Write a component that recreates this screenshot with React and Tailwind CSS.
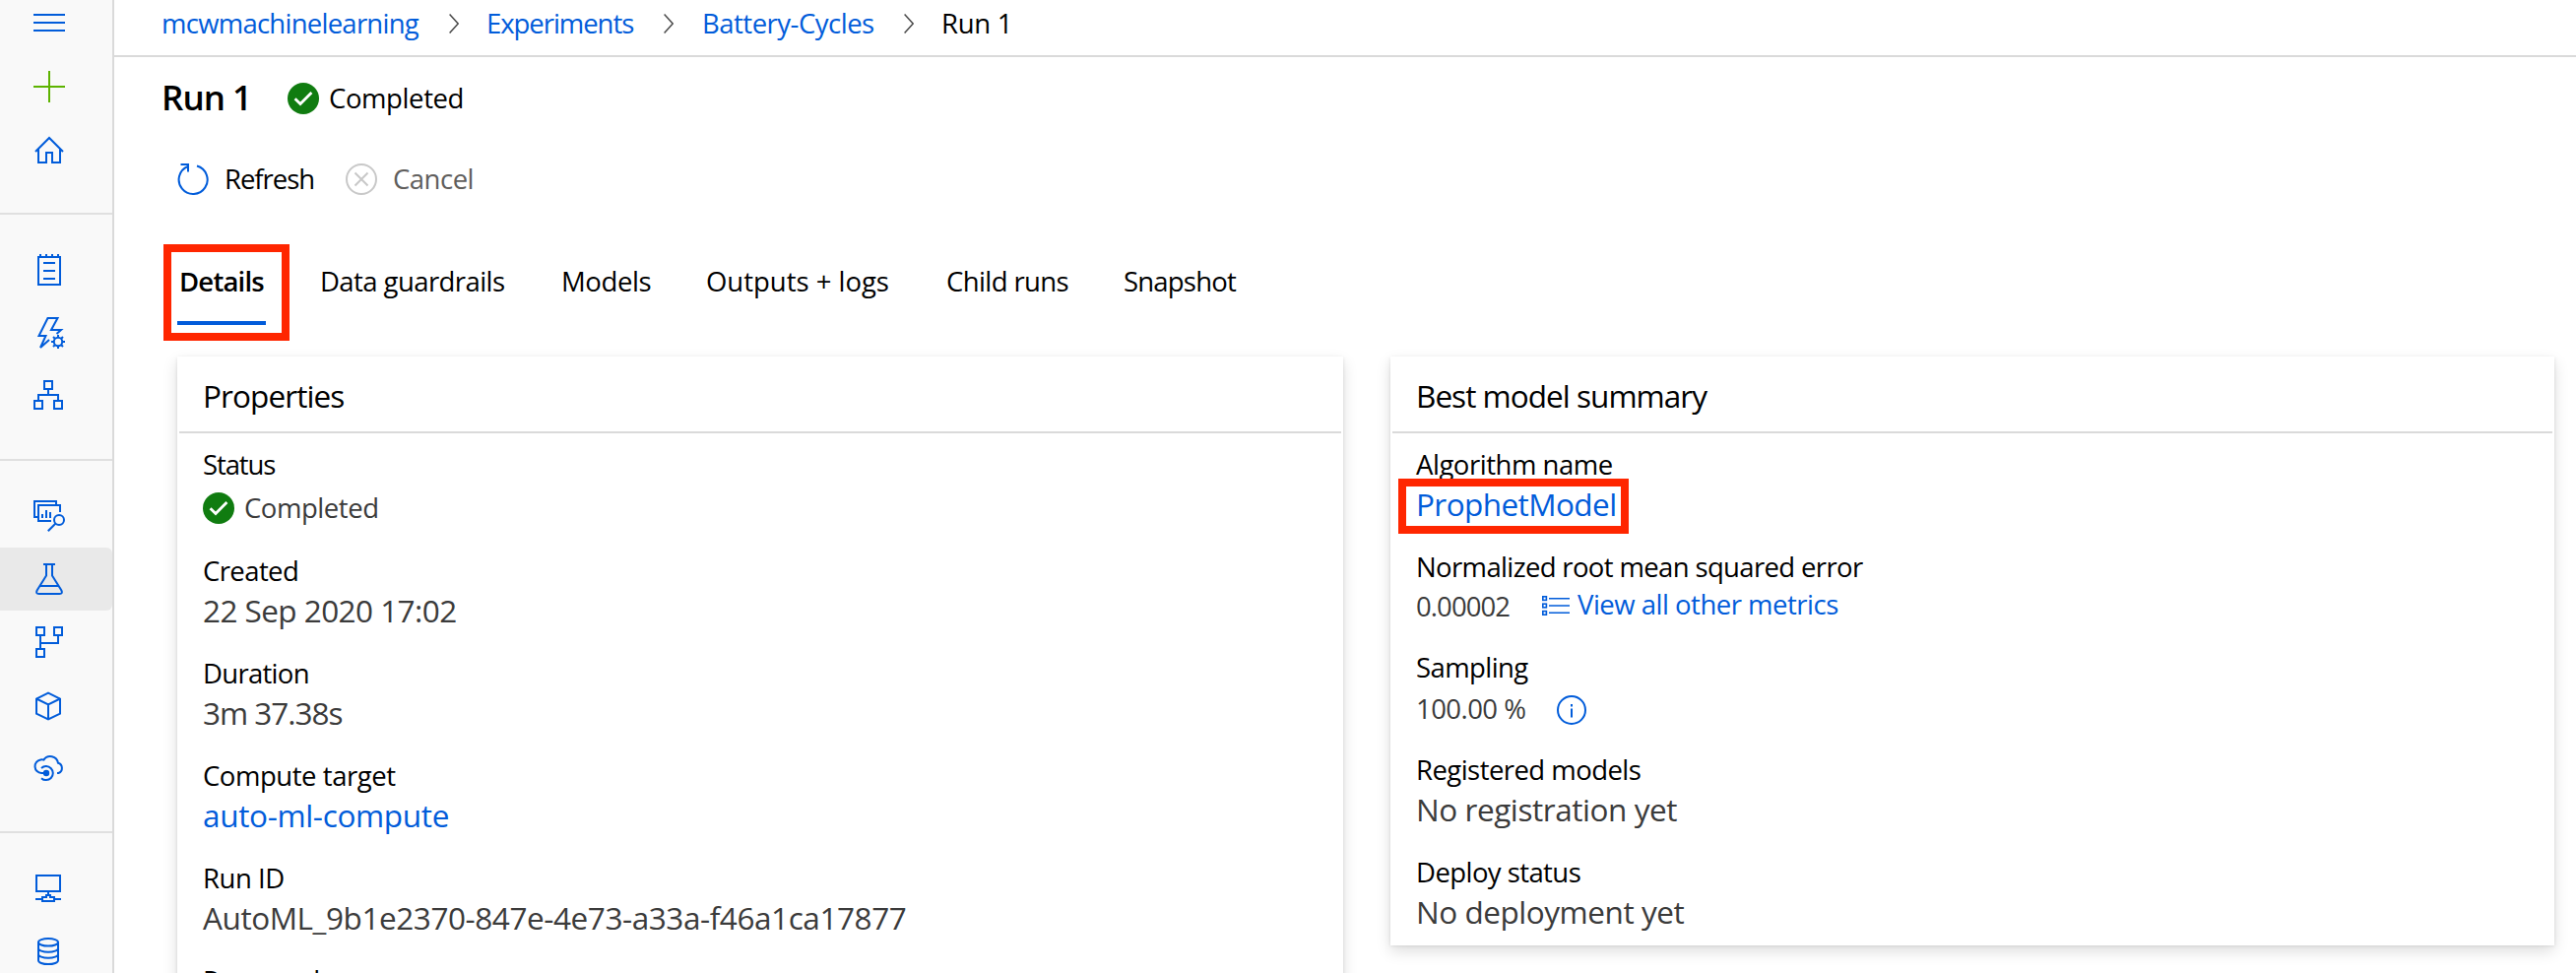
import React from "react";

/* ---------- icons ---------- */

function Glyph({ children, className = "text-[#015cda]" }) {
  return (
    <svg
      viewBox="0 0 32 32"
      className={`size-8 shrink-0 ${className}`}
      fill="none"
      stroke="currentColor"
      strokeWidth="2"
    >
      {children}
    </svg>
  );
}

const MenuIcon = () => (
  <Glyph>
    <path d="M0 7H32M0 15H32M0 23H32" />
  </Glyph>
);

const PlusIcon = () => (
  <Glyph className="text-[#5db300]">
    <path d="M0 16H32M16 0V32" />
  </Glyph>
);

const HomeIcon = () => (
  <Glyph>
    <path d="M5 15V29H13V19H19V29H27V15" />
    <path d="M2 18L16 4L30 18" />
  </Glyph>
);

const NotebookIcon = () => (
  <Glyph>
    <rect x="5" y="3" width="22" height="28" />
    <path d="M7 0V3M13 0V3M19 0V3M25 0V3M10 9H22M10 17H22M10 25H22" />
  </Glyph>
);

const AutoMlIcon = () => (
  <Glyph>
    <path d="M23.5 17L28 13H18L24.5 1H14.5L5.5 19H12.5L7 31L16 23" />
    <circle cx="25" cy="25" r="4.2" />
    <path d="M25 18V20.5M25 29.5V32M18 25H20.5M29.5 25H32M20 20L21.8 21.8M28.2 28.2L30 30M20 30L21.8 28.2M28.2 21.8L30 20" />
  </Glyph>
);

const DesignerIcon = () => (
  <Glyph>
    <rect x="11" y="1" width="8" height="8" />
    <rect x="1" y="21" width="8" height="8" />
    <rect x="21" y="21" width="8" height="8" />
    <path d="M15 9V15M5 21V15H25V21" />
  </Glyph>
);

const DatasetsIcon = () => (
  <Glyph>
    <path d="M5 17H1V1H23V5" />
    <path d="M27 12V5H5V21H18" />
    <path d="M9 14V18M13 10V18M17 12V18" />
    <circle cx="26" cy="20" r="5" />
    <path d="M22.5 23.5L14.8 31.2" />
  </Glyph>
);

const FlaskIcon = () => (
  <Glyph>
    <path d="M10 1H22M13 1V12.5L3.6 27.5Q2 31 5.5 31H26.5Q30 31 28.4 27.5L19 12.5V1" />
    <path d="M6.5 23H25.5" />
  </Glyph>
);

const PipelineIcon = () => (
  <Glyph>
    <rect x="3" y="1" width="8" height="8" />
    <rect x="21" y="1" width="8" height="8" />
    <rect x="3" y="23" width="8" height="8" />
    <path d="M7 9V23M25 9V17H7" />
  </Glyph>
);

const CubeIcon = () => (
  <Glyph>
    <path d="M15 3.6L27 9.5V24.7L15 30.5L3 24.7V9.5Z" />
    <path d="M3 9.5L15 15.5L27 9.5M15 15.5V30.5" />
  </Glyph>
);

const EndpointIcon = () => (
  <Glyph>
    <path d="M13 21H8A6.8 6.8 0 0 1 7.2 7.5Q9 7.2 10.4 7.6A8 8 0 0 1 25 10.8A5.4 5.4 0 0 1 25.5 21H24" />
    <circle cx="13" cy="21" r="3.2" fill="currentColor" stroke="none" />
    <path d="M8 16A7 7 0 1 1 8 26.2" />
  </Glyph>
);

const ComputeIcon = () => (
  <Glyph>
    <rect x="3" y="3" width="24" height="16" />
    <path d="M15 19V23M2 27H9M21 27H28M9 25H13V23H17V25H21V29H9Z" />
  </Glyph>
);

const DatabaseIcon = () => (
  <Glyph>
    <ellipse cx="15" cy="6.8" rx="10" ry="3.8" />
    <path d="M5 6.8V25.3A10 3.8 0 0 0 25 25.3V6.8" />
    <path d="M5 12.9A10 3.8 0 0 0 25 12.9M5 19A10 3.8 0 0 0 25 19" />
  </Glyph>
);

function CheckBadge() {
  return (
    <svg viewBox="0 0 32 32" className="size-8 shrink-0" fill="none">
      <circle cx="16" cy="16" r="16" fill="#107c10" />
      <path d="M7.6 16.3L13 21.6L24.4 10" stroke="#fff" strokeWidth="2.8" />
    </svg>
  );
}

function Chevron() {
  return (
    <svg
      viewBox="0 0 10 20"
      className="mt-[9px] h-5 w-2.5 shrink-0"
      fill="none"
      stroke="#4a4a4a"
      strokeWidth="1.5"
    >
      <path d="M0.6 0.5L9.2 10L0.6 19.5" />
    </svg>
  );
}

/* ---------- sidebar ---------- */

const groups = [
  [MenuIcon, PlusIcon, HomeIcon],
  [NotebookIcon, AutoMlIcon, DesignerIcon],
  [DatasetsIcon, FlaskIcon, PipelineIcon, CubeIcon, EndpointIcon],
  [ComputeIcon, DatabaseIcon],
];

function Sidebar() {
  return (
    <nav className="h-[988px] w-[116px] shrink-0 overflow-hidden border-r-2 border-[#dadada] bg-[#f9f9f9]">
      <div className="-mt-2 flex flex-col">
        {groups.map((icons, g) => (
          <div
            key={g}
            className="flex flex-col border-b-2 border-[#e0e0e0] pt-6 pb-8 first:pt-0 last:border-b-0"
          >
            {icons.map((Icon, i) => (
              <a
                key={i}
                className={
                  Icon === FlaskIcon
                    ? "flex h-16 items-center rounded-r-md bg-[#e9e9e9] pl-[34px]"
                    : "flex h-16 items-center pl-[34px]"
                }
              >
                <Icon />
              </a>
            ))}
          </div>
        ))}
      </div>
    </nav>
  );
}

/* ---------- header ---------- */

function Breadcrumb() {
  return (
    <header className="flex h-[58px] items-start border-b-2 border-[#dadada] pt-[5px] pl-12 text-[27.5px] leading-[37px] text-[#015cda]">
      <a className="w-[292px] tracking-[-0.75px]">mcwmachinelearning</a>
      <Chevron />
      <a className="ml-7 w-[180px] tracking-[-1.05px]">Experiments</a>
      <Chevron />
      <a className="ml-[29px] w-[205px] tracking-[-0.5px]">Battery-Cycles</a>
      <Chevron />
      <span className="ml-7 tracking-[-0.3px] text-black">Run 1</span>
    </header>
  );
}

const tabs = [
  ["Data guardrails", "w-[245px] tracking-[-0.58px]"],
  ["Models", "w-[147px] tracking-[-0.4px]"],
  ["Outputs + logs", "w-[244px] tracking-[-0.02px]"],
  ["Child runs", "w-[180px] tracking-[-0.6px]"],
  ["Snapshot", "tracking-[-0.8px]"],
];

function Tabs() {
  return (
    <div className="mt-[67px] flex h-[63px] pl-4 text-[27.5px] leading-[37px]">
      <div className="relative mr-[55px] w-[90px] border-b-4 border-[#015cda] pl-0.5 font-semibold tracking-[-0.81px]">
        Details
        <div className="absolute -top-[19px] -left-[14px] h-[98px] w-32 border-8 border-[#ff2600]" />
      </div>
      {tabs.map(([name, cls]) => (
        <div key={name} className={cls}>
          {name}
        </div>
      ))}
    </div>
  );
}

/* ---------- cards ---------- */

function Card({ title, titleClass, children }) {
  return (
    <section className="w-[1184px] shrink-0 bg-white px-0.5 shadow-[0_6.4px_14.4px_rgba(0,0,0,0.132),0_1.2px_3.6px_rgba(0,0,0,0.108)] last:w-[1182px]">
      <h2
        className={`h-[78px] border-b-2 border-[#dadada] pt-[18px] pl-6 text-[31.5px] leading-[43px] ${titleClass}`}
      >
        {title}
      </h2>
      <div className="flex flex-col gap-6 pt-[13px] pb-[13px] pl-6">{children}</div>
    </section>
  );
}

function Field({ label, labelClass, children }) {
  return (
    <div>
      <div className={`text-[27.5px] leading-[37px] ${labelClass}`}>{label}</div>
      {children}
    </div>
  );
}

function Value({ className, children }) {
  return <div className={`h-[43px] text-[31.5px] leading-[43px] ${className}`}>{children}</div>;
}

function Properties() {
  return (
    <Card title="Properties" titleClass="tracking-[-0.9px]">
      <Field label="Status" labelClass="tracking-[-1.12px]">
        <div className="flex h-[47px] items-start pt-[7px] text-[27.5px] leading-[37px]">
          <div className="mt-[3px]">
            <CheckBadge />
          </div>
          <span className="ml-[10px] tracking-[-0.45px] text-[#3b3b3b]">Completed</span>
        </div>
      </Field>
      <Field label="Created" labelClass="tracking-[-0.6px]">
        <Value className="tracking-[-0.56px] text-[#3b3b3b]">22 Sep 2020 17:02</Value>
      </Field>
      <Field label="Duration" labelClass="tracking-[-0.71px]">
        <Value className="tracking-[-1.03px] text-[#3b3b3b]">3m 37.38s</Value>
      </Field>
      <Field label="Compute target" labelClass="tracking-[-0.45px]">
        <Value className="tracking-[-0.34px] text-[#015cda]">auto-ml-compute</Value>
      </Field>
      <Field label="Run ID" labelClass="tracking-[-0.45px]">
        <Value className="tracking-[-0.43px] text-[#3b3b3b]">
          AutoML_9b1e2370-847e-4e73-a33a-f46a1ca17877
        </Value>
      </Field>
      <Field label="Run number" labelClass="tracking-[-0.7px]" />
    </Card>
  );
}

function BestModel() {
  return (
    <Card title="Best model summary" titleClass="tracking-[-0.97px]">
      <Field label="Algorithm name" labelClass="tracking-[-0.47px]">
        <Value className="relative tracking-[-0.58px] text-[#015cda]">
          ProphetModel
          <div className="absolute -top-1 -left-[18px] h-14 w-[234px] border-8 border-[#ff2600]" />
        </Value>
      </Field>
      <Field label="Normalized root mean squared error" labelClass="tracking-[-0.64px]">
        <div className="flex h-[41px] items-start text-[27.5px] leading-[37px]">
          <span className="mt-[3px] w-32 tracking-[-0.93px] text-[#3b3b3b]">0.00002</span>
          <svg
            viewBox="0 0 28 20"
            className="mt-[11px] h-5 w-7"
            fill="none"
            stroke="#015cda"
            strokeWidth="1.6"
          >
            <rect x="0.8" y="0.8" width="3.6" height="3.6" />
            <rect x="0.8" y="8.2" width="3.6" height="3.6" />
            <rect x="0.8" y="15.6" width="3.6" height="3.6" />
            <path d="M7 2.8H28M7 10H28M7 17.2H28" />
          </svg>
          <a className="mt-px ml-2 tracking-[-0.5px] text-[#015cda]">View all other metrics</a>
        </div>
      </Field>
      <Field label="Sampling" labelClass="tracking-[-0.59px]">
        <div className="flex h-[43px] items-start pt-[5px] text-[27.5px] leading-[37px]">
          <span className="w-[143px] tracking-[-0.55px] text-[#3b3b3b]">100.00 %</span>
          <svg
            viewBox="0 0 30 30"
            className="mt-[5px] size-[30px]"
            fill="none"
            stroke="#015cda"
            strokeWidth="2"
          >
            <circle cx="15" cy="15" r="14" />
            <path d="M15 9V11.4M15 13.4V22.4" />
          </svg>
        </div>
      </Field>
      <Field label="Registered models" labelClass="tracking-[-0.55px]">
        <Value className="tracking-[-0.44px] text-[#3b3b3b]">No registration yet</Value>
      </Field>
      <Field label="Deploy status" labelClass="tracking-[-0.57px]">
        <Value className="tracking-[-0.46px] text-[#3b3b3b]">No deployment yet</Value>
      </Field>
    </Card>
  );
}

/* ---------- page ---------- */

export default function App() {
  return (
    <div className="flex h-[988px] w-[2616px] overflow-hidden bg-white font-['Open_Sans','Noto_Sans',sans-serif] text-black">
      <Sidebar />
      <main className="min-w-0 flex-1">
        <Breadcrumb />
        <div className="pl-12">
          <div className="flex h-16 items-start pt-[17px]">
            <h1 className="w-32 text-[35px] leading-[47px] font-semibold tracking-[-0.95px]">
              Run 1
            </h1>
            <div className="mt-[9px]">
              <CheckBadge />
            </div>
            <span className="mt-1.5 ml-[10px] text-[27.5px] leading-[37px] tracking-[-0.4px]">
              Completed
            </span>
          </div>
          <div className="mt-[41px] flex h-[37px] items-start pl-4 text-[27.5px] leading-[37px]">
            <div className="mt-[3px]">
              <Glyph>
                <path d="M20 2.5A14.5 14.5 0 1 1 10.8 3" />
                <path d="M3.5 1H11V8.5" />
              </Glyph>
            </div>
            <span className="ml-4 w-[123px] tracking-[-1.02px]">Refresh</span>
            <div className="mt-[3px]">
              <Glyph className="text-[#c8c8c8]">
                <circle cx="16" cy="16" r="15" />
                <path d="M9.5 9.5L22.5 22.5M22.5 9.5L9.5 22.5" />
              </Glyph>
            </div>
            <span className="ml-4 tracking-[-0.5px] text-[#605e5c]">Cancel</span>
          </div>
          <Tabs />
          <div className="mt-8 flex items-start gap-[48px] pl-4">
            <Properties />
            <BestModel />
          </div>
        </div>
      </main>
    </div>
  );
}
